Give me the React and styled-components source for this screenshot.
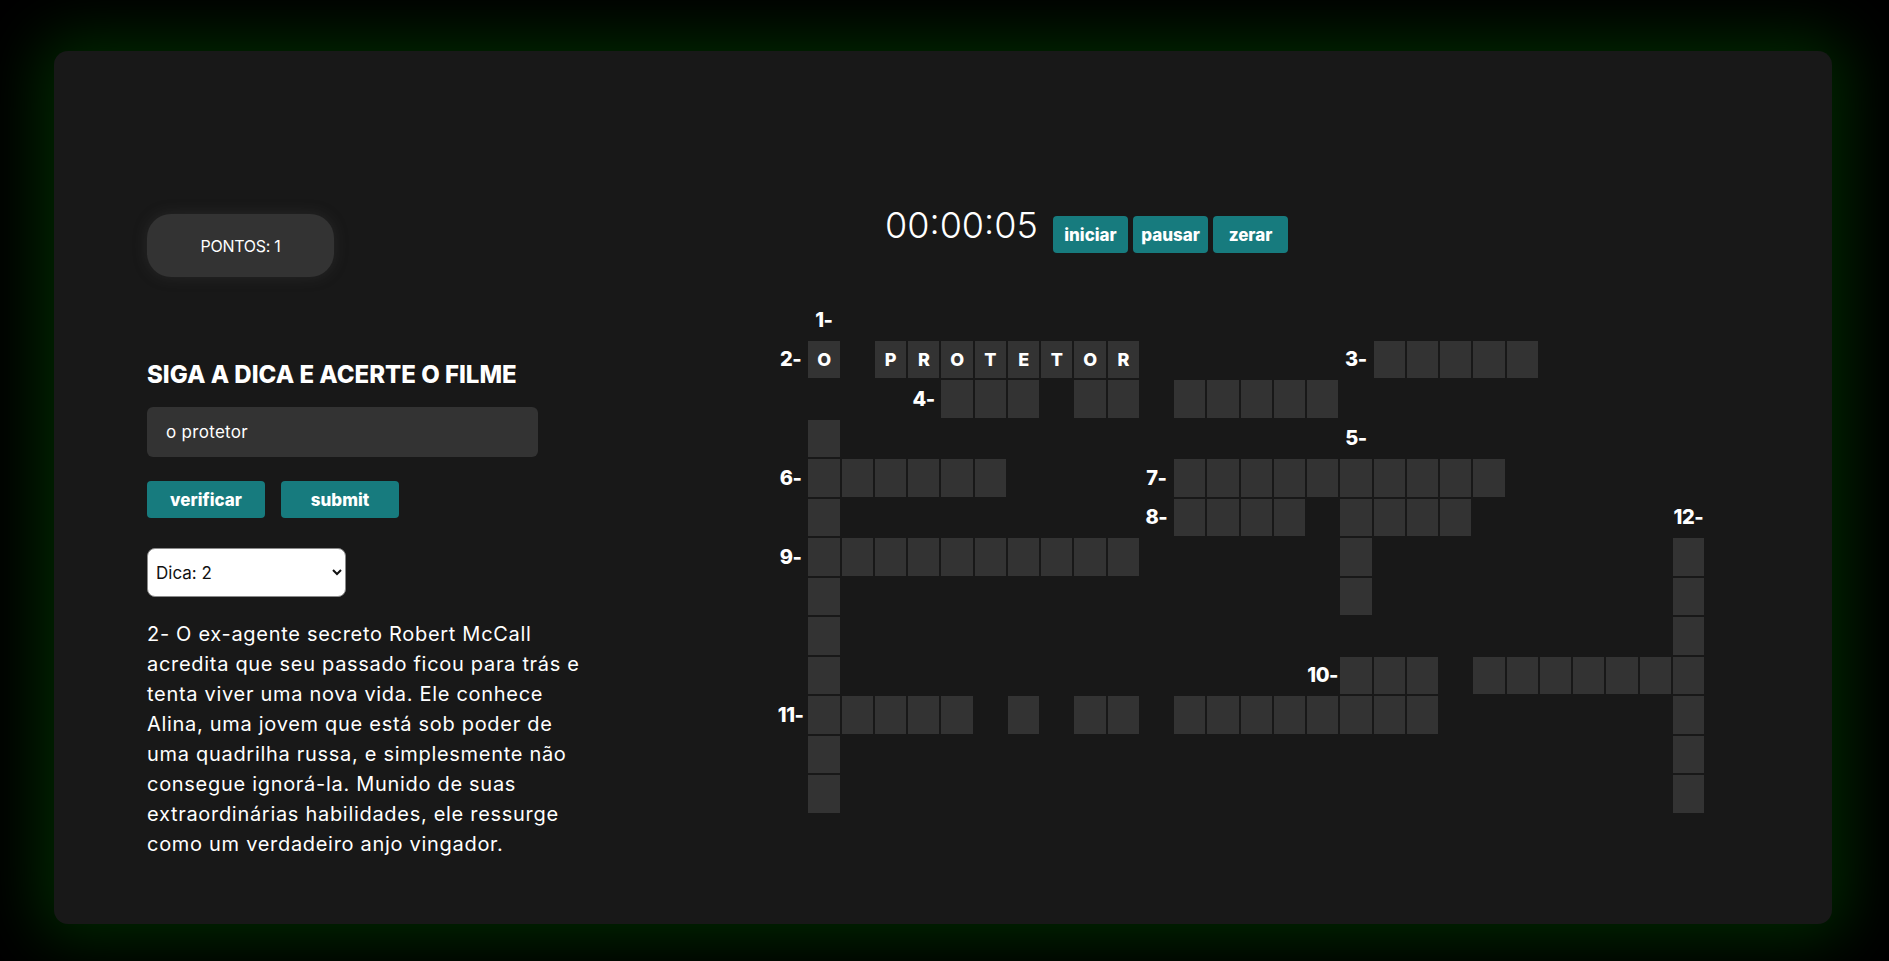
import styled, { createGlobalStyle } from "styled-components";

const GlobalStyle = createGlobalStyle`
  html, body {
    margin: 0;
    background: #000000;
    font-family: "Inter", "Open Sans", sans-serif;
    color: #ffffff;
  }
  * { box-sizing: border-box; }
`;

const Page = styled.div`
  min-height: 100vh;
  padding: 51px 57px 37px 54px;
`;

const Panel = styled.main`
  display: flex;
  height: 873px;
  padding-left: 93px;
  background: #181818;
  border-radius: 14px;
  box-shadow: 0 0 60px 16px rgba(0, 42, 0, 0.95);
`;

const Side = styled.section`
  display: flex;
  flex-direction: column;
  align-items: flex-start;
  width: 440px;
  padding-top: 163px;
`;

const Score = styled.div`
  display: flex;
  align-items: center;
  justify-content: center;
  width: 187px;
  height: 63px;
  border-radius: 24px;
  background: #333333;
  box-shadow: 0 0 14px rgba(70, 70, 70, 0.35);
  font-size: 16px;
  letter-spacing: -0.3px;
`;

const Title = styled.h2`
  margin: 83px 0 0;
  font-size: 24px;
  line-height: 30px;
  font-weight: 800;
  letter-spacing: 0;
`;

const Guess = styled.input`
  margin-top: 17px;
  width: 391px;
  height: 50px;
  padding: 0 19px;
  border: none;
  border-radius: 6px;
  background: #333333;
  color: #ffffff;
  font: 17px "Inter", sans-serif;
  letter-spacing: 0.3px;
  outline: none;
`;

const Actions = styled.div`
  display: flex;
  gap: 16px;
  margin-top: 24px;
`;

const Button = styled.button`
  width: ${(p) => p.$w}px;
  height: 37px;
  border: none;
  border-radius: 4px;
  background: #177b7e;
  color: #ffffff;
  font: 800 17px "Inter", sans-serif;
  letter-spacing: 0;
  cursor: pointer;
`;

const Select = styled.select`
  margin-top: 30px;
  width: 199px;
  height: 49px;
  padding: 0 4px;
  border: 1px solid #8a8a8a;
  border-radius: 8px;
  background: #ffffff;
  color: #111111;
  font: 17px "Inter", sans-serif;
`;

const Hint = styled.p`
  margin: 22px 0 0;
  font-size: 20px;
  line-height: 30px;
  letter-spacing: 0.7px;
  white-space: nowrap;
`;

const Board = styled.section`
  display: flex;
  flex-direction: column;
  margin-left: 188px;
  padding-top: 156px;
`;

const TimerRow = styled.div`
  display: flex;
  align-items: center;
  gap: 5px;
  margin-left: 110px;
`;

const Clock = styled.span`
  width: 163px;
  margin-bottom: 19px;
  font-size: 36px;
  line-height: 36px;
  font-weight: 300;
`;

const Grid = styled.div`
  display: grid;
  grid-template-columns: repeat(28, 31.25px);
  grid-template-rows: repeat(13, 37.5px);
  column-gap: 2px;
  row-gap: 2px;
  margin-top: 39px;
`;

const Slot = styled.div`
  display: flex;
  align-items: center;
  justify-content: center;
  background: ${(p) => (p.$cell ? "#333333" : "transparent")};
  font-weight: 800;
  font-size: ${(p) => (p.$label ? "20px" : "18px")};
  letter-spacing: -0.5px;
  white-space: nowrap;
`;

const rows = [
  "............................",
  ".O.PROTETOR.......#####.....",
  ".....###.##.#####...........",
  ".#..........................",
  ".######.....##########......",
  ".#..........####.####.......",
  ".##########......#.........#",
  ".#...............#.........#",
  ".#.........................#",
  ".#...............###.#######",
  ".#####.#.##.########.......#",
  ".#.........................#",
  ".#.........................#",
];

// row, column index (column -1 of the puzzle is index 0)
const labels = {
  "0-1": "1-",
  "1-0": "2-",
  "1-17": "3-",
  "2-4": "4-",
  "3-17": "5-",
  "4-0": "6-",
  "4-11": "7-",
  "5-11": "8-",
  "5-27": "12-",
  "6-0": "9-",
  "9-16": "10-",
  "10-0": "11-",
};

const hint = [
  "2- O ex-agente secreto Robert McCall",
  "acredita que seu passado ficou para trás e",
  "tenta viver uma nova vida. Ele conhece",
  "Alina, uma jovem que está sob poder de",
  "uma quadrilha russa, e simplesmente não",
  "consegue ignorá-la. Munido de suas",
  "extraordinárias habilidades, ele ressurge",
  "como um verdadeiro anjo vingador.",
];

const Crossword = () => (
  <Grid>
    {rows.map((line, r) =>
      line.split("").map((ch, c) => {
        const label = labels[`${r}-${c}`];
        if (label) return <Slot key={`${r}-${c}`} $label>{label}</Slot>;
        if (ch === ".") return <Slot key={`${r}-${c}`} />;
        return (
          <Slot key={`${r}-${c}`} $cell>
            {ch === "#" ? "" : ch}
          </Slot>
        );
      })
    )}
  </Grid>
);

const App = () => (
  <>
    <GlobalStyle />
    <Page>
      <Panel>
        <Side>
          <Score>PONTOS: 1</Score>
          <Title>SIGA A DICA E ACERTE O FILME</Title>
          <Guess defaultValue="o protetor" />
          <Actions>
            <Button $w={118}>verificar</Button>
            <Button $w={118}>submit</Button>
          </Actions>
          <Select defaultValue="2">
            {Array.from({ length: 12 }, (_, i) => (
              <option key={i} value={i + 1}>
                Dica: {i + 1}
              </option>
            ))}
          </Select>
          <Hint>
            {hint.map((line, i) => (
              <span key={i}>
                {line}
                <br />
              </span>
            ))}
          </Hint>
        </Side>
        <Board>
          <TimerRow>
            <Clock>00:00:05</Clock>
            <Button $w={75}>iniciar</Button>
            <Button $w={75}>pausar</Button>
            <Button $w={75}>zerar</Button>
          </TimerRow>
          <Crossword />
        </Board>
      </Panel>
    </Page>
  </>
);

export default App;
